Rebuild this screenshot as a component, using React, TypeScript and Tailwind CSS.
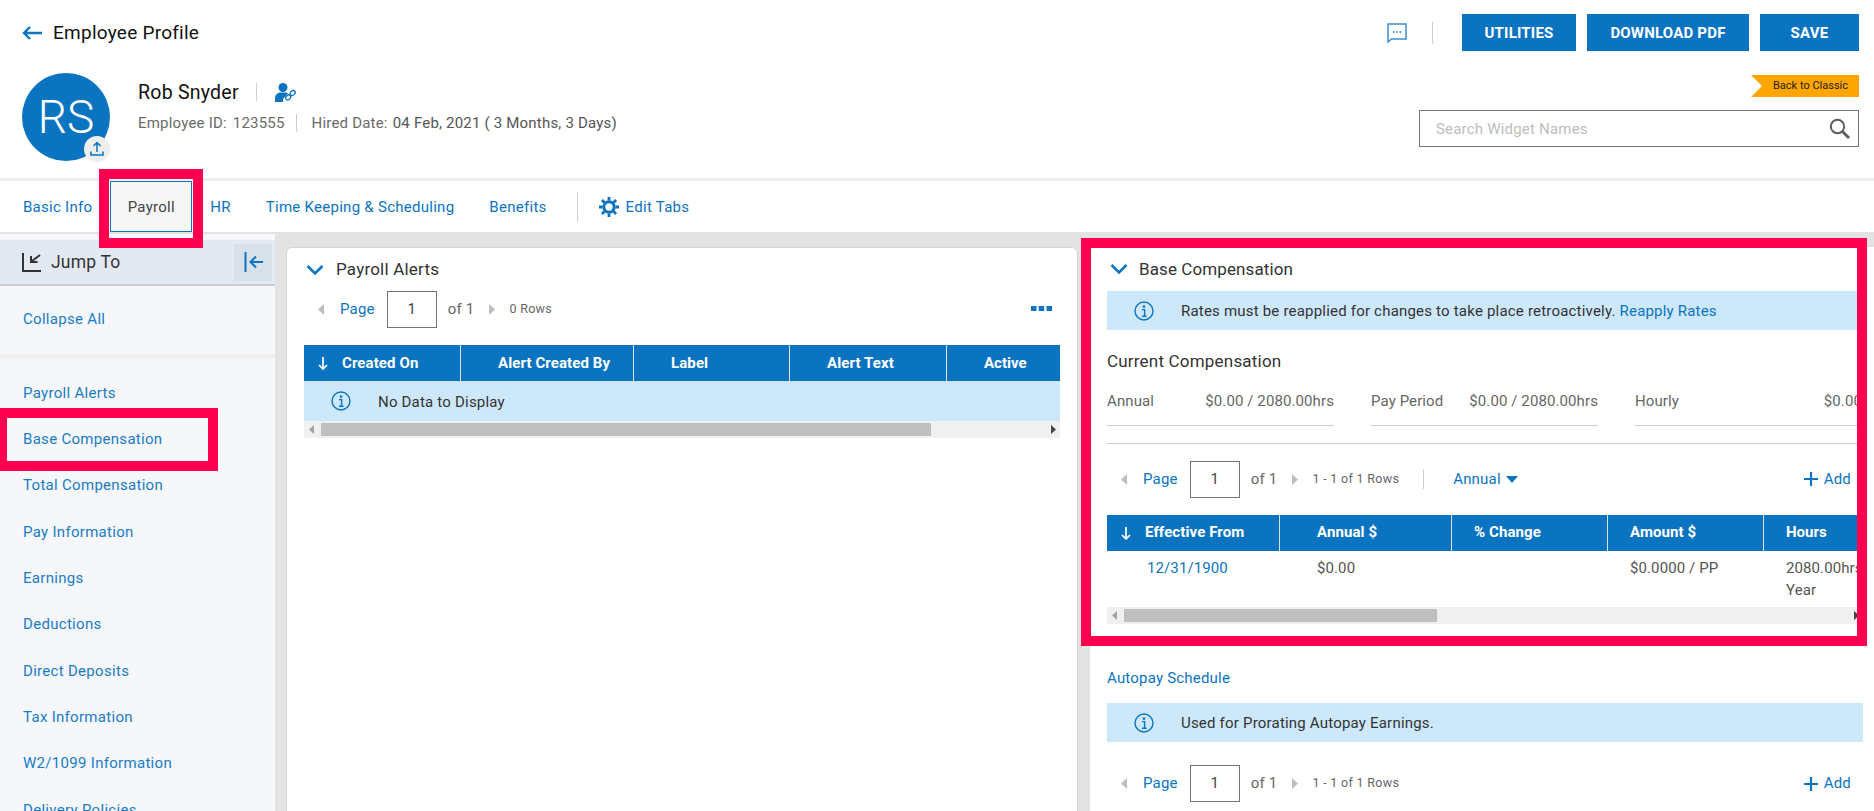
import React from "react";

function Info() {
  return (
    <svg width="20" height="20" viewBox="0 0 20 20" fill="none" stroke="#0b74c1" className="shrink-0">
      <circle cx="10" cy="10" r="9" strokeWidth="1.4" />
      <circle cx="10" cy="5.6" r="1.3" fill="#0b74c1" stroke="none" />
      <path d="M8 8.6h2.6v6.4M8 15.2h4.6" strokeWidth="1.4" />
    </svg>
  );
}

function Chevron() {
  return (
    <svg width="18" height="12" viewBox="0 0 18 12" fill="none" stroke="#0b74c1" strokeWidth="2.6" className="shrink-0">
      <path d="M1.5 2l7.500 7.500L16.500 2" />
    </svg>
  );
}

function SortDown() {
  return (
    <svg width="10" height="14" viewBox="0 0 10 14" fill="none" stroke="#fff" strokeWidth="1.7" className="shrink-0">
      <path d="M5 1v12M1 9l4 4 4-4" />
    </svg>
  );
}

function Tri({ dir }: { dir: "l" | "r" }) {
  return (
    <svg width="6" height="11" viewBox="0 0 6 11" fill="#bdbdbd" className="shrink-0">
      <path d={dir === "l" ? "M6 0v11L0 5.500z" : "M0 0v11l6-5.500z"} />
    </svg>
  );
}

function Pager({ rows }: { rows: string }) {
  return (
    <div className="flex items-center h-[37px] pl-[14px]">
      <Tri dir="l" />
      <span className="ml-[16px] text-[15px] tracking-[0.2px] text-[#0b74c1]">Page</span>
      <span className="ml-[12px] w-[50px] h-[37px] border border-[#767676] flex items-center justify-center text-[15px] text-[#444]">1</span>
      <span className="ml-[11px] text-[15px] text-[#666] tracking-[0.2px]">of 1</span>
      <span className="ml-[15px]"><Tri dir="r" /></span>
      <span className="ml-[14px] text-[12.500px] text-[#666] tracking-[0.3px]">{rows}</span>
    </div>
  );
}

function Add() {
  return (
    <span className="flex items-center text-[15px] text-[#0b74c1] tracking-[0.2px]">
      <svg width="14" height="14" viewBox="0 0 14 14" stroke="#0b74c1" strokeWidth="2.200" className="mr-[6px]">
        <path d="M7 0v14M0 7h14" />
      </svg>
      Add
    </span>
  );
}

function InfoBar({ children }: { children: React.ReactNode }) {
  return (
    <div className="h-[39px] bg-[#cde7fb] flex items-center pl-[27px] text-[15px] tracking-[0.2px] text-[#333]">
      <Info />
      <span className="ml-[27px] pt-[2px]">{children}</span>
    </div>
  );
}

function Scrollbar({ width }: { width: string }) {
  return (
    <div className="h-[17px] bg-[#f0f0f0] flex items-center relative">
      <span className="ml-[5px]"><svg width="5" height="9" viewBox="0 0 5 9" fill="#a3a3a3"><path d="M5 0v9L0 4.500z" /></svg></span>
      <div className={`h-[13px] bg-[#bfbfbf] ml-[7px] ${width}`} />
      <span className="absolute top-[4px] right-[4px]"><svg width="5" height="9" viewBox="0 0 5 9" fill="#444"><path d="M0 0v9l5-4.500z" /></svg></span>
    </div>
  );
}

function HeadCell({ className, children, sort }: { className: string; children: React.ReactNode; sort?: boolean }) {
  return (
    <div className={`h-full flex items-center border-r border-[#d5e5f1] shrink-0 text-[15px] tracking-[0.1px] font-bold text-white ${className}`}>
      {sort && <span className="mr-[14px] flex"><SortDown /></span>}
      {children}
    </div>
  );
}

const navItems = [
  "Payroll Alerts",
  "Base Compensation",
  "Total Compensation",
  "Pay Information",
  "Earnings",
  "Deductions",
  "Direct Deposits",
  "Tax Information",
  "W2/1099 Information",
  "Delivery Policies",
];

function Annotation({ className }: { className: string }) {
  return <div className={`absolute border-[10px] border-[#ff0050] pointer-events-none ${className}`} />;
}

export default function App() {
  return (
    <div className="relative h-[811px] w-[1874px] overflow-hidden bg-white flex flex-col font-['Roboto',sans-serif] text-[#333]">
      {/* Header */}
      <header className="h-[178px] shrink-0 flex justify-between pl-[22px] pr-[15px]">
        <div className="flex flex-col">
          <div className="h-[37px] mt-[14px] flex items-center">
            <svg width="20" height="14" viewBox="0 0 20 14" fill="none" stroke="#0b74c1" strokeWidth="2.400">
              <path d="M20 7H2M8 1L2 7l6 6" />
            </svg>
            <span className="ml-[11px] pt-[2px] text-[19px] tracking-[0.25px] text-[#111]">Employee Profile</span>
          </div>
          <div className="flex mt-[22px]">
            <div className="relative w-[88px] h-[88px] rounded-full bg-[#0b74c1] flex items-center justify-center text-white text-[46px] font-light">
              RS
              <span className="absolute left-[62px] top-[63px] w-[26px] h-[26px] rounded-full bg-[#eeeeee] flex items-center justify-center">
                <svg width="16" height="16" viewBox="0 0 16 16" fill="none" stroke="#0b74c1" strokeWidth="1.500">
                  <path d="M8 11V2M4.500 5L8 1.500 11.500 5M2 10.500V14h12v-3.500" />
                </svg>
              </span>
            </div>
            <div className="ml-[28px] flex flex-col">
              <div className="flex items-center mt-[6px] h-[26px]">
                <span className="pt-[2px] text-[19.500px] tracking-[0.25px] text-[#111]">Rob Snyder</span>
                <span className="ml-[17px] w-px h-[18px] bg-[#cfcfcf]" />
                <svg width="22" height="21" viewBox="0 0 22 21" className="ml-[18px]" fill="#0b74c1">
                  <circle cx="8" cy="5.500" r="4.500" />
                  <path d="M0 20v-4c0-3 2.500-5.500 5.500-5.500H10c1.500 0 2.500 .5 3 1L8 17v3z" />
                  <g fill="none" stroke="#0b74c1" strokeWidth="1.300">
                    <rect x="15" y="9" width="5.500" height="4" rx="2" transform="rotate(-45 17.700 11)" />
                    <rect x="10.500" y="13.500" width="5.500" height="4" rx="2" transform="rotate(-45 13.200 15.500)" />
                  </g>
                </svg>
              </div>
              <div className="flex items-center mt-[7px] text-[15px] tracking-[0.2px] text-[#6b6b6b]">
                <span>Employee ID:</span>
                <span className="ml-[6px]">123555</span>
                <span className="ml-[11px] w-px h-[18px] bg-[#cfcfcf]" />
                <span className="ml-[15px]">Hired Date:</span>
                <span className="ml-[5px] text-[#555]">04 Feb, 2021 ( 3 Months, 3 Days)</span>
              </div>
            </div>
          </div>
        </div>
        <div className="flex flex-col items-end w-[500px]">
          <div className="flex items-center mt-[14px] h-[37px]">
            <svg width="20" height="20" viewBox="0 0 20 20" fill="none" stroke="#3b8fd0" strokeWidth="1.500">
              <path d="M1 1h18v15H4.500L1 19z" />
              <path d="M6 9h1.500M9.300 9h1.500M12.500 9H14" strokeWidth="1.600" stroke="#0b74c1" />
            </svg>
            <span className="ml-[25px] w-px h-[22px] bg-[#cfcfcf]" />
            <span className="ml-[29px] w-[114px] h-[37px] pt-[1px] bg-[#0b74c1] flex items-center justify-center text-white text-[15px] tracking-[0.2px] font-bold">UTILITIES</span>
            <span className="ml-[11px] w-[162px] h-[37px] pt-[1px] bg-[#0b74c1] flex items-center justify-center text-white text-[15px] tracking-[0.2px] font-bold">DOWNLOAD PDF</span>
            <span className="ml-[11px] w-[99px] h-[37px] pt-[1px] bg-[#0b74c1] flex items-center justify-center text-white text-[15px] tracking-[0.2px] font-bold">SAVE</span>
          </div>
          <div className="mt-[24px] h-[22px] w-[108px] bg-[#ffa500] flex items-center justify-end pr-[11px] text-[11px] text-[#222] [clip-path:polygon(0_0,100%_0,100%_100%,0_100%,11px_50%)]">
            Back to Classic
          </div>
          <div className="mt-[13px] w-[440px] h-[37px] border border-[#767676] flex items-center justify-between pl-[16px] pr-[8px]">
            <span className="pt-[2px] text-[15px] tracking-[0.2px] text-[#bdbdbd]">Search Widget Names</span>
            <svg width="21" height="21" viewBox="0 0 21 21" fill="none" stroke="#5c5c5c">
              <circle cx="8.500" cy="8.500" r="6.700" strokeWidth="2" />
              <path d="M13.500 13.500L20 20" strokeWidth="2.800" />
            </svg>
          </div>
        </div>
      </header>

      {/* Tabs */}
      <nav className="h-[54px] shrink-0 border-t-[3px] border-[#eeeeee] flex items-center pl-[23px] text-[15px] tracking-[0.27px] text-[#0b74c1]">
        <span className="pt-[2px]">Basic Info</span>
        <span className="ml-[18px] w-[82px] h-[51px] pt-[2px] bg-[#f7f7f7] border border-[#0b74c1] flex items-center justify-center text-[#444]">Payroll</span>
        <span className="ml-[18px] pt-[2px]">HR</span>
        <span className="ml-[35px] pt-[2px]">Time Keeping &amp; Scheduling</span>
        <span className="ml-[35px] pt-[2px]">Benefits</span>
        <span className="ml-[30px] w-px h-[30px] bg-[#cfcfcf]" />
        <svg width="20" height="20" viewBox="0 0 20 20" fill="none" stroke="#0b74c1" className="ml-[21px]">
          <circle cx="10" cy="10" r="5.200" strokeWidth="3" />
          <path d="M10 0v3.500M10 16.500V20M0 10h3.500M16.500 10H20M2.900 2.900l2.500 2.500M14.600 14.600l2.500 2.500M2.900 17.100l2.500-2.500M14.600 5.400l2.500-2.500" strokeWidth="2.800" />
        </svg>
        <span className="ml-[7px] pt-[2px]">Edit Tabs</span>
      </nav>

      {/* Body */}
      <main className="flex-1 min-h-0 flex bg-[#e3e3e3]">
        <aside className="w-[275px] shrink-0 mt-[2px] bg-[#f5f7fb] flex flex-col">
          <div className="mt-[6px] h-[46px] shrink-0 bg-[#e3e9f3] border-b-2 border-[#c9cdd2] flex items-center pl-[22px] pr-[3px]">
            <svg width="19" height="19" viewBox="0 0 19 19" fill="none" stroke="#333" strokeWidth="2">
              <path d="M1 0v18h18" />
              <path d="M18 2l-8 6M9 3v6h6.500" stroke="#333" />
            </svg>
            <span className="ml-[10px] text-[17.500px] tracking-[0.2px] text-[#333] pt-[1px]">Jump To</span>
            <span className="ml-auto w-[38px] h-[37px] bg-[#d8e1ea] flex items-center justify-center">
              <svg width="19" height="20" viewBox="0 0 19 20" fill="none" stroke="#0b74c1" strokeWidth="2">
                <path d="M1.500 0v20" />
                <path d="M19 10H7M12 4.500L6.500 10l5.500 5.500" />
              </svg>
            </span>
          </div>
          <div className="h-[73px] shrink-0 flex items-center pl-[23px] pb-[2px] border-b-[5px] border-[#f0f0f0] text-[15px] tracking-[0.3px] text-[#1a7cc4]">
            Collapse All
          </div>
          <div className="flex flex-col pt-[11px]">
            {navItems.map((n) => (
              <div key={n} className="h-[46.300px] shrink-0 flex items-center pl-[23px] text-[15px] tracking-[0.3px] text-[#1a7cc4]">
                {n}
              </div>
            ))}
          </div>
        </aside>

        <section className="ml-[11px] mt-[15px] w-[792px] shrink-0 bg-white rounded-t-[6px] border border-[#d5d5d5] border-b-0 pl-[17px] pr-[17px]">
          <div className="flex items-center h-[43px] pl-[2px]">
            <Chevron />
            <span className="ml-[12px] pt-[1px] text-[17px] tracking-[0.2px] text-[#333]">Payroll Alerts</span>
          </div>
          <div className="flex items-center justify-between">
            <Pager rows="0 Rows" />
            <svg width="21" height="5" viewBox="0 0 21 5" fill="#0b74c1" className="mr-[8px] -mt-[2px]">
              <rect width="5.500" height="5" />
              <rect x="7.700" width="5.500" height="5" />
              <rect x="15.500" width="5.500" height="5" />
            </svg>
          </div>
          <div className="mt-[17px] h-[36px] bg-[#0b74c1] flex items-center">
            <HeadCell sort className="w-[157px] pl-[14px]">Created On</HeadCell>
            <HeadCell className="w-[173px] pl-[37px]">Alert Created By</HeadCell>
            <HeadCell className="w-[156px] pl-[37px]">Label</HeadCell>
            <HeadCell className="w-[157px] pl-[37px]">Alert Text</HeadCell>
            <div className="pl-[37px] text-[15px] font-bold text-white">Active</div>
          </div>
          <div className="h-[40px] bg-[#cde7fb] flex items-center pl-[27px] text-[15px] tracking-[0.2px] text-[#333]">
            <Info />
            <span className="ml-[27px] pt-[2px]">No Data to Display</span>
          </div>
          <Scrollbar width="w-[610px]" />
        </section>

        <section className="ml-[12px] mt-[15px] w-[792px] shrink-0 bg-white pl-[17px] pr-[19px]">
          <div className="flex items-center h-[44px]">
            <span className="ml-[3px] flex"><Chevron /></span>
            <span className="ml-[11px] pt-[2px] text-[17px] tracking-[0.1px] text-[#333]">Base Compensation</span>
          </div>
          <InfoBar>
            Rates must be reapplied for changes to take place retroactively. <span className="text-[#0b74c1]">Reapply Rates</span>
          </InfoBar>
          <div className="mt-[19px] text-[17px] tracking-[0.2px] text-[#333]">Current Compensation</div>
          <div className="mt-[15px] flex gap-[37px] text-[15px] tracking-[0.1px] text-[#666]">
            {[
              ["Annual", "$0.00 / 2080.00hrs"],
              ["Pay Period", "$0.00 / 2080.00hrs"],
              ["Hourly", "$0.00"],
            ].map(([l, v]) => (
              <div key={l} className="w-[227px] h-[36px] border-b border-[#cfcfcf] flex justify-between">
                <span>{l}</span>
                <span>{v}</span>
              </div>
            ))}
          </div>
          <div className="mt-[17px] h-px bg-[#cfcfcf]" />
          <div className="mt-[17px] flex items-center justify-between">
            <div className="flex items-center">
              <Pager rows="1 - 1 of 1 Rows" />
              <span className="ml-[24px] w-px h-[20px] bg-[#cfcfcf]" />
              <span className="ml-[29px] text-[15px] tracking-[0.2px] text-[#0b74c1]">Annual</span>
              <svg width="12" height="7" viewBox="0 0 12 7" fill="#0b74c1" className="ml-[5px]"><path d="M0 0h12L6 7z" /></svg>
            </div>
            <span className="mr-[12px]"><Add /></span>
          </div>
          <div className="mt-[17px] h-[36px] bg-[#0b74c1] flex items-center overflow-hidden">
            <HeadCell sort className="w-[173px] pl-[14px]">Effective From</HeadCell>
            <HeadCell className="w-[172px] pl-[37px]">Annual $</HeadCell>
            <HeadCell className="w-[156px] pl-[22px]">% Change</HeadCell>
            <HeadCell className="w-[156px] pl-[22px]">Amount $</HeadCell>
            <div className="pl-[22px] text-[15px] font-bold text-white">Hours</div>
          </div>
          <div className="h-[56px] flex overflow-hidden pt-[6px] text-[15px] leading-[22px] tracking-[0.1px] text-[#555]">
            <div className="w-[173px] shrink-0 pl-[40px] text-[#0b74c1]">12/31/1900</div>
            <div className="w-[172px] shrink-0 pl-[37px]">$0.00</div>
            <div className="w-[156px] shrink-0" />
            <div className="w-[156px] shrink-0 pl-[22px]">$0.0000 / PP</div>
            <div className="w-[99px] shrink-0 pl-[22px] whitespace-nowrap">2080.00hrs /<br />Year</div>
          </div>
          <Scrollbar width="w-[313px]" />
          <div className="mt-[43px] text-[15px] tracking-[0.2px] text-[#0b74c1]">Autopay Schedule</div>
          <div className="mt-[14px]">
            <InfoBar>Used for Prorating Autopay Earnings.</InfoBar>
          </div>
          <div className="mt-[23px] flex items-center justify-between">
            <Pager rows="1 - 1 of 1 Rows" />
            <span className="mr-[12px]"><Add /></span>
          </div>
        </section>
      </main>

      {/* Highlight annotations */}
      <Annotation className="left-[99px] top-[169px] w-[104px] h-[79px]" />
      <Annotation className="-left-[3px] top-[408px] w-[221px] h-[63px]" />
      <Annotation className="left-[1081px] top-[238px] w-[786px] h-[408px]" />
    </div>
  );
}
